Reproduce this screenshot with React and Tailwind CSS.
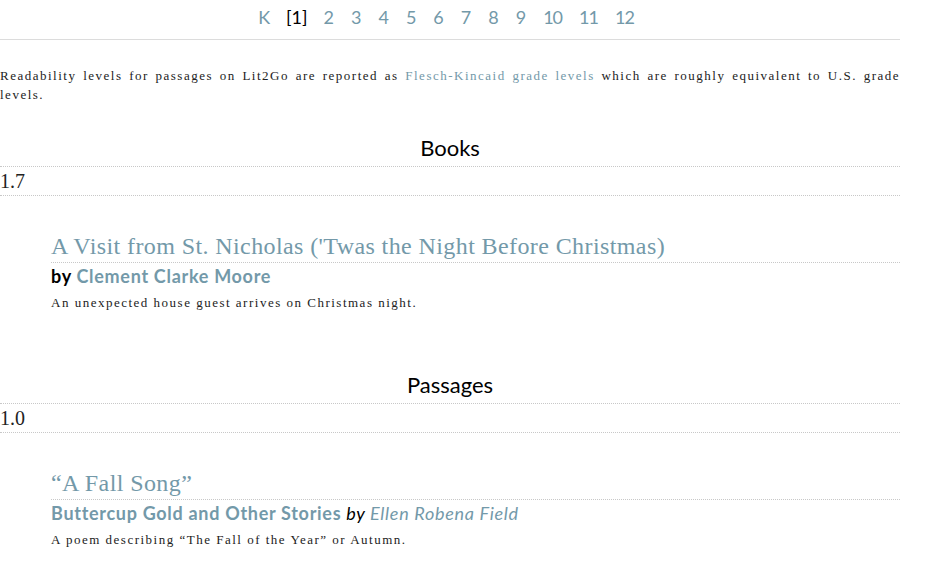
const grades = ["K", "1", "2", "3", "4", "5", "6", "7", "8", "9", "10", "11", "12"];

const slab = "font-['Liberation_Serif',serif]";
const sans = "font-['Lato','Noto_Sans',sans-serif]";

const Entry = ({ title, children, desc }) => (
  <div className="pl-[51px] pt-[35px]">
    <h3 className={`${slab} text-[24px] leading-[30px] tracking-[0.4px] text-[#7399a9] border-b border-dotted border-[#c8c8c8] pb-[1px]`}>
      {title}
    </h3>
    <div className={`${sans} text-[18px] leading-[26px] tracking-[0.7px]`}>{children}</div>
    <p className={`${slab} text-[13px] leading-[20px] tracking-[1.5px] mt-[4px] text-[#222]`}>{desc}</p>
  </div>
);

const Level = ({ heading, level, children }) => (
  <section>
    <h2 className={`${sans} text-[22px] leading-[28px] pb-[4px] text-center text-black`}>{heading}</h2>
    <div className={`${slab} text-[20px] leading-[28px] text-[#222] border-y border-dotted border-[#c8c8c8]`}>
      {level}
    </div>
    {children}
  </section>
);

export default function App() {
  return (
    <div className="w-[900px] bg-white min-h-[574px]">
      <nav className="border-b border-[#dcdcdc] h-[40px] flex items-center justify-center gap-[15px] pb-[4px] pr-[8px]">
        {grades.map((g) =>
          g === "1" ? (
            <span key={g} className={`${sans} text-[18px] text-black`}>[1]</span>
          ) : (
            <a
              key={g}
              href="#"
              className={`${sans} text-[18px] text-[#7399a9] px-[1px] ${g.length > 1 ? "tracking-[-1px]" : ""}`}
            >
              {g}
            </a>
          )
        )}
      </nav>

      <p className={`${slab} text-[13px] leading-[19px] tracking-[1.5px] text-justify text-[#222] mt-[26px]`}>
        Readability levels for passages on Lit2Go are reported as{" "}
        <a href="#" className="text-[#7399a9]">Flesch-Kincaid grade levels</a> which are roughly
        equivalent to U.S. grade levels.
      </p>

      <div className="mt-[30px]">
        <Level heading="Books" level="1.7">
          <Entry
            title="A Visit from St. Nicholas ('Twas the Night Before Christmas)"
            desc="An unexpected house guest arrives on Christmas night."
          >
            <span className="font-bold text-black">by </span>
            <a href="#" className="font-bold text-[#7399a9]">Clement Clarke Moore</a>
          </Entry>
        </Level>
      </div>

      <div className="mt-[58px]">
        <Level heading="Passages" level="1.0">
          <Entry
            title="“A Fall Song”"
            desc="A poem describing “The Fall of the Year” or Autumn."
          >
            <a href="#" className="font-bold text-[#7399a9]">Buttercup Gold and Other Stories</a>
            <span className="italic text-black"> by </span>
            <a href="#" className="italic text-[#7399a9]">Ellen Robena Field</a>
          </Entry>
        </Level>
      </div>
    </div>
  );
}
